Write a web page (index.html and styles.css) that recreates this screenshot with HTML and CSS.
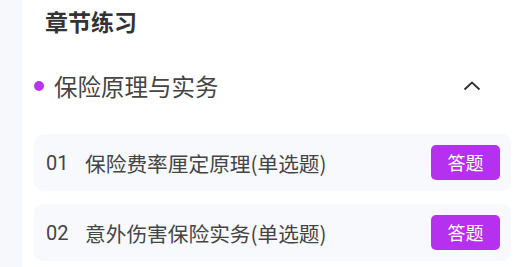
FILE: index.html
```html
<!doctype html>
<html>
<head>
<meta charset="utf-8">
<title>章节练习</title>
<link rel="stylesheet" href="styles.css">
</head>
<body>
<div class="page">
  <div class="side"></div>
  <div class="main">
    <h2 class="title">章节练习</h2>
    <div class="chapter">
      <span class="dot"></span>
      <span class="chapter-name">保险原理与实务</span>
      <svg class="arrow" width="18" height="10" viewBox="0 0 18 10"><path d="M1.5 8.5 L9 1.5 L16.5 8.5" fill="none" stroke="#333" stroke-width="2"/></svg>
    </div>
    <div class="item">
      <span class="num">01</span>
      <span class="name">保险费率厘定原理(单选题)</span>
      <span class="btn">答题</span>
    </div>
    <div class="item">
      <span class="num">02</span>
      <span class="name">意外伤害保险实务(单选题)</span>
      <span class="btn">答题</span>
    </div>
  </div>
</div>
</body>
</html>
```

FILE: styles.css
```css
html, body {
  margin: 0;
  padding: 0;
  background: #fff;
}
body {
  font-family: "Noto Sans CJK SC", "Noto Sans", sans-serif;
  color: #333;
  overflow: hidden;
}
.page {
  display: flex;
  height: 267px;
}
.side {
  width: 22px;
  background: #f6f8fc;
}
.main {
  flex: 1;
  padding: 5px 11px 0 12px;
}
.title {
  margin: 0;
  padding-left: 11px;
  font-size: 23px;
  line-height: 32px;
  font-weight: bold;
  color: #333;
}
.chapter {
  display: flex;
  align-items: center;
  height: 40px;
  margin-top: 29px;
}
.dot {
  width: 10px;
  height: 10px;
  border-radius: 50%;
  background: #b735f0;
  margin-right: 10px;
}
.chapter-name {
  flex: 1;
  font-size: 23.5px;
  color: #444;
}
.arrow {
  margin-right: 30px;
}
.item {
  display: flex;
  align-items: center;
  height: 57px;
  margin-top: 28px;
  padding: 0 11px 0 12px;
  background: #f8f9fc;
  border-radius: 9px;
}
.item + .item {
  margin-top: 13px;
}
.num {
  width: 39px;
  font-family: Roboto, "Noto Sans CJK SC", sans-serif;
  font-size: 20px;
  color: #444;
}
.name {
  flex: 1;
  font-size: 20.7px;
  color: #444;
}
.btn {
  width: 69px;
  height: 35px;
  line-height: 35px;
  text-align: center;
  border-radius: 5px;
  background: #b630f0;
  color: #fff;
  font-size: 18px;
}
```
